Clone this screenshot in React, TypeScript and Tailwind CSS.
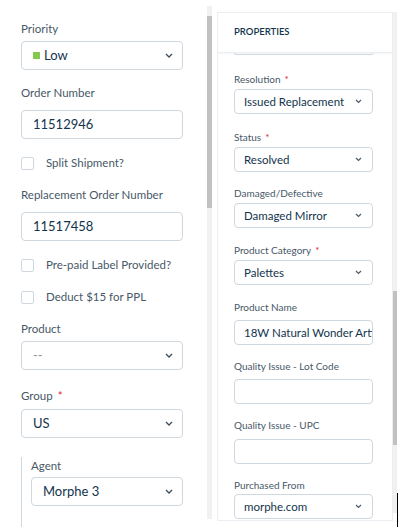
import React from "react";

const font = { fontFamily: 'Lato, "Noto Sans", sans-serif' };

function Chevron({ small }: { small?: boolean }) {
  return small ? (
    <svg width="7" height="5" viewBox="0 0 7 5" className="shrink-0">
      <path d="M1 1 L3.5 3.5 L6 1" fill="none" stroke="#4b5b6b" strokeWidth="1.2" />
    </svg>
  ) : (
    <svg width="8" height="5" viewBox="0 0 8 5" className="shrink-0">
      <path d="M1 1 L4 4 L7 1" fill="none" stroke="#3b4b5b" strokeWidth="1.3" />
    </svg>
  );
}

function LSelect({ children }: { children: React.ReactNode }) {
  return (
    <div className="h-[29px] w-full rounded-[4px] border border-[#cfd7df] bg-white flex items-center pl-[11px] pr-[9px] text-[13px] text-[#12344d]">
      <div className="flex-1 flex items-center">{children}</div>
      <Chevron />
    </div>
  );
}

function LInput({ value }: { value: string }) {
  return (
    <div className="h-[29px] w-full rounded-[4px] border border-[#cfd7df] bg-white flex items-center pl-[11px] text-[13px] text-[#12344d]">
      {value}
    </div>
  );
}

function LLabel({ children, req }: { children: React.ReactNode; req?: boolean }) {
  return (
    <div className="h-[18px] leading-[18px] text-[11.5px] text-[#475867]">
      {children}
      {req && <span className="text-[#d72d30] ml-[5px]">*</span>}
    </div>
  );
}

function LCheck({ label }: { label: string }) {
  return (
    <div className="h-[18px] flex items-center text-[11.5px] text-[#475867]">
      <div className="w-[13px] h-[13px] rounded-[2px] border border-[#cfd7df] bg-white" />
      <span className="ml-[12px] whitespace-nowrap">{label}</span>
    </div>
  );
}

function RLabel({ children, req }: { children: React.ReactNode; req?: boolean }) {
  return (
    <div className="h-[16px] leading-[16px] text-[10px] text-[#475867]">
      {children}
      {req && <span className="text-[#d72d30] ml-[4px]">*</span>}
    </div>
  );
}

function RSelect({ value }: { value: string }) {
  return (
    <div className="h-[25px] w-full rounded-[4px] border border-[#cfd7df] bg-white flex items-center pl-[9px] pr-[10px] text-[11.5px] text-[#12344d]">
      <div className="flex-1 whitespace-nowrap overflow-hidden">{value}</div>
      <Chevron small />
    </div>
  );
}

function RInput({ value }: { value?: string }) {
  return (
    <div className="h-[25px] w-full rounded-[4px] border border-[#cfd7df] bg-white flex items-center pl-[9px] text-[11.5px] text-[#12344d] overflow-hidden whitespace-nowrap">
      {value}
    </div>
  );
}

export default function App() {
  return (
    <div className="relative w-[403px] h-[527px] overflow-hidden bg-white flex" style={font}>
      {/* Left panel */}
      <div className="w-[207px] h-full pl-[21px] pr-[24px] pt-[20px] flex flex-col">
        <LLabel>Priority</LLabel>
        <div className="mt-[3px]">
          <LSelect>
            <span className="w-[7px] h-[7px] bg-[#86c74f] mr-[4px] inline-block" />
            <span>Low</span>
          </LSelect>
        </div>
        <div className="mt-[14px]"><LLabel>Order Number</LLabel></div>
        <div className="mt-[8px]"><LInput value="11512946" /></div>
        <div className="mt-[15px]"><LCheck label="Split Shipment?" /></div>
        <div className="mt-[14px]"><LLabel>Replacement Order Number</LLabel></div>
        <div className="mt-[8px]"><LInput value="11517458" /></div>
        <div className="mt-[15px]"><LCheck label="Pre-paid Label Provided?" /></div>
        <div className="mt-[14px]"><LCheck label="Deduct $15 for PPL" /></div>
        <div className="mt-[14px]"><LLabel>Product</LLabel></div>
        <div className="mt-[3px]">
          <LSelect><span className="text-[#8a97a3]">--</span></LSelect>
        </div>
        <div className="mt-[17px]"><LLabel req>Group</LLabel></div>
        <div className="mt-[4px]"><LSelect>US</LSelect></div>
        <div className="mt-[19px] border-l border-[#cfd7df] pl-[9px] flex-1">
          <LLabel>Agent</LLabel>
          <div className="mt-[2px]"><LSelect>Morphe 3</LSelect></div>
        </div>
      </div>

      {/* Left scrollbar */}
      <div className="w-[5px] mt-[6px] h-[513px] bg-[#f1f1f1] flex flex-col">
        <div className="mt-[10px] h-[192px] bg-[#c1c1c1]" />
      </div>

      <div className="w-[5px]" />

      {/* Right card */}
      <div className="w-[176px] mt-[12px] h-[509px] border border-[#ebeff3] bg-white flex flex-col overflow-hidden">
        <div className="h-[40px] shrink-0 border-b border-[#ebeff3] shadow-[0_1px_2px_rgba(18,52,77,0.06)] flex items-center pl-[16px] text-[9.5px] font-semibold text-[#12344d]">
          PROPERTIES
        </div>
        <div className="pl-[16px] pr-[19px] flex flex-col">
          <div className="h-[2px] border-x border-b border-[#cfd7df] rounded-b-[4px]" />
          <div className="mt-[16px]"><RLabel req>Resolution</RLabel></div>
          <div className="mt-[2px]"><RSelect value="Issued Replacement" /></div>
          <div className="mt-[15px]"><RLabel req>Status</RLabel></div>
          <div className="mt-[2px]"><RSelect value="Resolved" /></div>
          <div className="mt-[13px]"><RLabel>Damaged/Defective</RLabel></div>
          <div className="mt-[2px]"><RSelect value="Damaged Mirror" /></div>
          <div className="mt-[14px]"><RLabel req>Product Category</RLabel></div>
          <div className="mt-[2px]"><RSelect value="Palettes" /></div>
          <div className="mt-[14px]"><RLabel>Product Name</RLabel></div>
          <div className="mt-[5px]"><RInput value="18W Natural Wonder Artistry Palette" /></div>
          <div className="mt-[13px]"><RLabel>Quality Issue - Lot Code</RLabel></div>
          <div className="mt-[5px]"><RInput /></div>
          <div className="mt-[13px]"><RLabel>Quality Issue - UPC</RLabel></div>
          <div className="mt-[6px]"><RInput /></div>
          <div className="mt-[13px]"><RLabel>Purchased From</RLabel></div>
          <div className="mt-[1px]"><RSelect value="morphe.com" /></div>
        </div>
      </div>

      {/* Right scrollbar */}
      <div className="w-[4px] mt-[12px] h-[501px] bg-[#f1f1f1] flex flex-col">
        <div className="mt-[279px] h-[154px] bg-[#c1c1c1]" />
      </div>

      {/* caret line */}
      <div className="absolute left-[397px] top-[493px] w-[1px] h-[34px] bg-black" />
    </div>
  );
}
